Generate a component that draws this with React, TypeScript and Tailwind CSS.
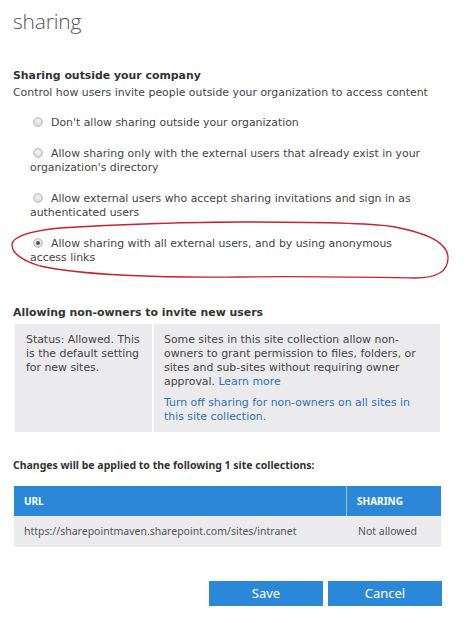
import React from "react";

const verdana = { fontFamily: '"DejaVu Sans", Verdana, sans-serif' };

function Radio({ checked }: { checked?: boolean }) {
  return (
    <span className="inline-block align-[-1px] mr-[8px] ml-[3px]">
      <svg width="10" height="10" viewBox="0 0 10 10">
        <defs>
          <radialGradient id={checked ? "rg1" : "rg0"} cx="50%" cy="40%" r="60%">
            <stop offset="0%" stopColor="#f6f6f6" />
            <stop offset="100%" stopColor="#d2d2d2" />
          </radialGradient>
        </defs>
        <circle cx="5" cy="5" r="4.4" fill={`url(#${checked ? "rg1" : "rg0"})`} stroke="#b0b0b0" strokeWidth="0.8" />
        {checked && <circle cx="5" cy="5" r="2" fill="#555" />}
      </svg>
    </span>
  );
}

export default function App() {
  return (
    <div className="w-[474px] h-[623px] bg-white text-[#444] relative overflow-hidden">
      <div className="pl-[13px] pt-[6px]">
        <div
          className="text-[21px] font-light leading-[30px] text-[#555] tracking-[-0.2px]"
          style={{ fontFamily: '"Open Sans", "Noto Sans", sans-serif' }}
        >
          sharing
        </div>

        <div style={verdana} className="mt-[33px] text-[10.9px] leading-[14px]">
          <div className="font-bold text-[#333]">Sharing outside your company</div>
          <div className="mt-[3px]">Control how users invite people outside your organization to access content</div>

          <div className="pl-[17px] pr-[20px] mt-[16px] flex flex-col gap-[17px]">
            <div>
              <Radio />Don't allow sharing outside your organization
            </div>
            <div>
              <Radio />Allow sharing only with the external users that already exist in your organization's directory
            </div>
            <div>
              <Radio />Allow external users who accept sharing invitations and sign in as authenticated users
            </div>
            <div className="pr-[30px]">
              <Radio checked />Allow sharing with all external users, and by using anonymous access links
            </div>
          </div>

          <div className="font-bold text-[#333] mt-[41px]">Allowing non-owners to invite new users</div>
          <div className="mt-[4px] ml-[2px] w-[425px] flex bg-[#ebebed]">
            <div className="w-[139px] px-[11px] pt-[9px] pb-[8px] border-r-2 border-white">
              Status: Allowed. This is the default setting for new sites.
            </div>
            <div className="flex-1 pl-[10px] pr-[14px] pt-[9px] pb-[8px]">
              <div>
                Some sites in this site collection allow non-owners to grant permission to files, folders, or sites and sub-sites without requiring owner approval.{" "}
                <span className="text-[#2f72b8]">Learn more</span>
              </div>
              <div className="mt-[7px] text-[#2f72b8]">
                Turn off sharing for non-owners on all sites in this site collection.
              </div>
            </div>
          </div>
        </div>

        <div style={{ fontFamily: '"Noto Sans", "Open Sans", sans-serif' }}>
          <div className="mt-[26px] text-[10.5px] font-bold text-[#333] leading-[14px]">
            Changes will be applied to the following 1 site collections:
          </div>
          <div className="mt-[14px] ml-[1px] w-[427px]">
            <div className="flex h-[30px] items-center bg-[#2b88d8] text-white text-[10px] font-bold">
              <div className="w-[333px] pl-[10px] h-full flex items-center border-r border-[#9cc8ee]">URL</div>
              <div className="flex-1 pl-[10px]">SHARING</div>
            </div>
            <div className="flex h-[31px] items-center bg-[#ebebed] text-[10.5px] text-[#555]">
              <div className="w-[333px] pl-[10px]">https://sharepointmaven.sharepoint.com/sites/intranet</div>
              <div className="flex-1 pl-[11px]">Not allowed</div>
            </div>
          </div>

          <div className="mt-[34px] flex justify-end gap-[5px] pr-[32px]">
            <button className="w-[114px] h-[25px] bg-[#2b88d8] text-white text-[13px] leading-[25px]">Save</button>
            <button className="w-[114px] h-[25px] bg-[#2b88d8] text-white text-[13px] leading-[25px]">Cancel</button>
          </div>
        </div>
      </div>

      <svg className="absolute left-0 top-0 pointer-events-none" width="474" height="623" viewBox="0 0 474 623">
        <path
          d="M 240 222 C 320 222, 380 224, 395 227 C 420 232, 448 240, 448 258 C 448 272, 435 278, 415 278 C 350 277, 300 276, 240 277 C 160 278, 80 275, 40 266 C 20 260, 12 252, 12 245 C 12 236, 30 231, 60 228 C 120 224, 200 222, 240 222 Z"
          fill="none"
          stroke="#c8232c"
          strokeWidth="1.3"
        />
      </svg>
    </div>
  );
}
